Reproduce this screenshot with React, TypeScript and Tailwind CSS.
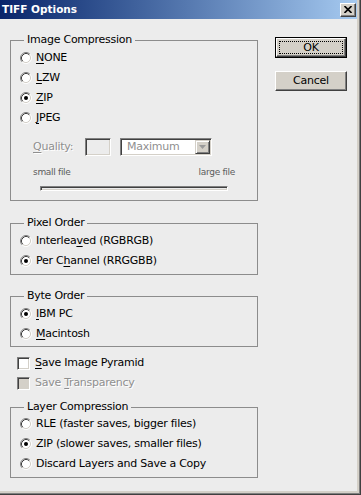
import React from "react";

function Radio({ checked = false }: { checked?: boolean }) {
  return (
    <svg width="12" height="12" viewBox="0 0 12 12" className="shrink-0 block">
      <circle cx="6" cy="6" r="4.5" fill="#ffffff" />
      <path d="M2.11 9.89 A5.5 5.5 0 0 1 9.89 2.11" fill="none" stroke="#808080" strokeWidth="1" />
      <path d="M9.89 2.11 A5.5 5.5 0 0 1 2.11 9.89" fill="none" stroke="#ffffff" strokeWidth="1" />
      <path d="M2.82 9.18 A4.5 4.5 0 0 1 9.18 2.82" fill="none" stroke="#404040" strokeWidth="1" />
      <path d="M9.18 2.82 A4.5 4.5 0 0 1 2.82 9.18" fill="none" stroke="#d4d0c8" strokeWidth="1" />
      {checked && <circle cx="6" cy="6" r="2" fill="#000000" />}
    </svg>
  );
}

function U({ children }: { children: React.ReactNode }) {
  return <span className="underline decoration-1 underline-offset-[2px]">{children}</span>;
}

function RadioRow({ checked, children }: { checked?: boolean; children: React.ReactNode }) {
  return (
    <div className="flex items-center h-[20px] pl-[9px] gap-[4px]">
      <Radio checked={checked} />
      <span className="leading-[14px] whitespace-nowrap">{children}</span>
    </div>
  );
}

function Group({
  title,
  className,
  children,
}: {
  title: string;
  className: string;
  children: React.ReactNode;
}) {
  return (
    <fieldset className={className}>
      <legend className="ml-[13px] px-[3px] h-[14px] leading-[14px] whitespace-nowrap">{title}</legend>
      {children}
    </fieldset>
  );
}

function CheckRow({ disabled, children }: { disabled?: boolean; children: React.ReactNode }) {
  return (
    <div className="flex items-center h-[20px] pl-[7px] gap-[5px]">
      <div
        className={
          disabled
            ? "w-[13px] h-[13px] shrink-0 border border-t-[#808080] border-l-[#808080] border-b-white border-r-white shadow-[inset_1px_1px_0_#404040,inset_-1px_-1px_0_#d4d0c8] bg-[#d4d0c8]"
            : "w-[13px] h-[13px] shrink-0 border border-t-[#808080] border-l-[#808080] border-b-white border-r-white shadow-[inset_1px_1px_0_#404040,inset_-1px_-1px_0_#d4d0c8] bg-white"
        }
      />
      <span
        className={
          disabled
            ? "leading-[14px] whitespace-nowrap text-[#8f8f8f] [text-shadow:1px_1px_0_#ffffff]"
            : "leading-[14px] whitespace-nowrap"
        }
      >
        {children}
      </span>
    </div>
  );
}

export default function App() {
  return (
    <div className="w-[361px] h-[495px] overflow-hidden font-['DejaVu_Sans',sans-serif] text-[11px] tracking-[-0.25px] text-black">
      <div className="w-full h-full border-r border-b border-[#404040]">
        <div className="w-full h-full border-r border-b border-[#808080]">
          <div className="w-full h-full border-r-2 border-b-2 border-[#d4d0c8] bg-[#ececec] flex flex-col">
            {/* Title bar */}
            <div className="h-[19px] shrink-0 flex items-center justify-between bg-linear-to-r from-[#0a246a] to-[#a6caf0]">
              <span className="pl-[2px] text-white font-bold text-[10.5px] tracking-[0px] leading-[19px]">
                TIFF Options
              </span>
              <div className="mr-[1px] w-[16px] h-[14px] bg-[#d4d0c8] border border-t-white border-l-white border-b-[#404040] border-r-[#404040] shadow-[inset_-1px_-1px_0_#808080] flex items-center justify-center">
                <svg width="8" height="7" viewBox="0 0 8 7" className="block">
                  <path d="M0.5 0 L7.5 7 M7.5 0 L0.5 7" stroke="#000000" strokeWidth="1.6" fill="none" />
                </svg>
              </div>
            </div>

            {/* Body */}
            <div className="flex flex-1">
              {/* Left column */}
              <div className="ml-[10px] w-[248px] flex flex-col">
                <Group title="Image Compression" className="mt-[14px] border border-[#8c8c8c]">
                  <div className="pt-[1px]">
                    <RadioRow>
                      <U>N</U>ONE
                    </RadioRow>
                    <RadioRow>
                      <U>L</U>ZW
                    </RadioRow>
                    <RadioRow checked>
                      <U>Z</U>IP
                    </RadioRow>
                    <RadioRow>
                      <U>J</U>PEG
                    </RadioRow>
                  </div>
                  <div className="mt-[10px] h-[18px] flex items-center pl-[22px]">
                    <span className="w-[52px] text-[#8f8f8f] [text-shadow:1px_1px_0_#ffffff] leading-[14px]">
                      <U>Q</U>uality:
                    </span>
                    <div className="w-[26px] h-[18px] border border-t-[#808080] border-l-[#808080] border-b-white border-r-white shadow-[inset_1px_1px_0_#404040,inset_-1px_-1px_0_#d4d0c8] bg-[#ececec]" />
                    <div className="ml-[9px] w-[92px] h-[18px] flex items-center border border-t-[#808080] border-l-[#808080] border-b-white border-r-white shadow-[inset_1px_1px_0_#404040,inset_-1px_-1px_0_#d4d0c8] bg-white p-[1px]">
                      <span className="flex-1 pl-[5px] text-[#8f8f8f] leading-[14px]">Maximum</span>
                      <div className="w-[15px] h-[14px] bg-[#d4d0c8] border border-t-[#d4d0c8] border-l-[#d4d0c8] border-b-[#404040] border-r-[#404040] shadow-[inset_1px_1px_0_#ffffff,inset_-1px_-1px_0_#808080] flex items-center justify-center">
                        <svg width="7" height="4" viewBox="0 0 7 4" className="block">
                          <path d="M0 0 L7 0 L3.5 4 Z" fill="#9a9a9a" />
                        </svg>
                      </div>
                    </div>
                  </div>
                  <div className="mt-[9px] h-[14px] flex items-center justify-between px-[22px] text-[9px] tracking-[-0.3px] text-[#5c5c5c] leading-[14px]">
                    <span>small file</span>
                    <span>large file</span>
                  </div>
                  <div className="mt-[7px] mb-[9px] ml-[29px] w-[188px] h-[5px] border border-t-[#808080] border-l-[#808080] border-b-white border-r-white shadow-[inset_1px_1px_0_#404040,inset_-1px_-1px_0_#d4d0c8] bg-[#ececec]" />
                </Group>

                <Group title="Pixel Order" className="mt-[15px] border border-[#8c8c8c]">
                  <div className="pt-[1px] pb-[3px]">
                    <RadioRow>
                      Interlea<U>v</U>ed (RGBRGB)
                    </RadioRow>
                    <RadioRow checked>
                      Per C<U>h</U>annel (RRGGBB)
                    </RadioRow>
                  </div>
                </Group>

                <Group title="Byte Order" className="mt-[14px] border border-[#8c8c8c]">
                  <div className="pt-[1px] pb-[2px]">
                    <RadioRow checked>
                      <U>I</U>BM PC
                    </RadioRow>
                    <RadioRow>
                      <U>M</U>acintosh
                    </RadioRow>
                  </div>
                </Group>

                <div className="mt-[6px]">
                  <CheckRow>
                    <U>S</U>ave Image Pyramid
                  </CheckRow>
                  <CheckRow disabled>
                    Save <U>T</U>ransparency
                  </CheckRow>
                </div>

                <Group title="Layer Compression" className="mt-[7px] border border-[#8c8c8c]">
                  <div className="pt-[0px] pb-[3px]">
                    <RadioRow>RLE (faster saves, bigger files)</RadioRow>
                    <RadioRow checked>ZIP (slower saves, smaller files)</RadioRow>
                    <RadioRow>Discard Layers and Save a Copy</RadioRow>
                  </div>
                </Group>
              </div>

              {/* Right column: buttons */}
              <div className="ml-[17px] w-[72px] flex flex-col">
                <div className="mt-[18px] h-[21px] border border-black">
                  <div className="relative w-full h-full bg-[#d4d0c8] border border-t-white border-l-white border-b-[#404040] border-r-[#404040] shadow-[inset_-1px_-1px_0_#808080] flex items-center justify-center">
                    <span className="leading-[14px]">OK</span>
                    <div className="absolute inset-[2px] border border-dotted border-black" />
                  </div>
                </div>
                <div className="mt-[13px] h-[20px] bg-[#d4d0c8] border border-t-white border-l-white border-b-[#404040] border-r-[#404040] shadow-[inset_-1px_-1px_0_#808080] flex items-center justify-center">
                  <span className="leading-[14px]">Cancel</span>
                </div>
              </div>
            </div>
          </div>
        </div>
      </div>
    </div>
  );
}
